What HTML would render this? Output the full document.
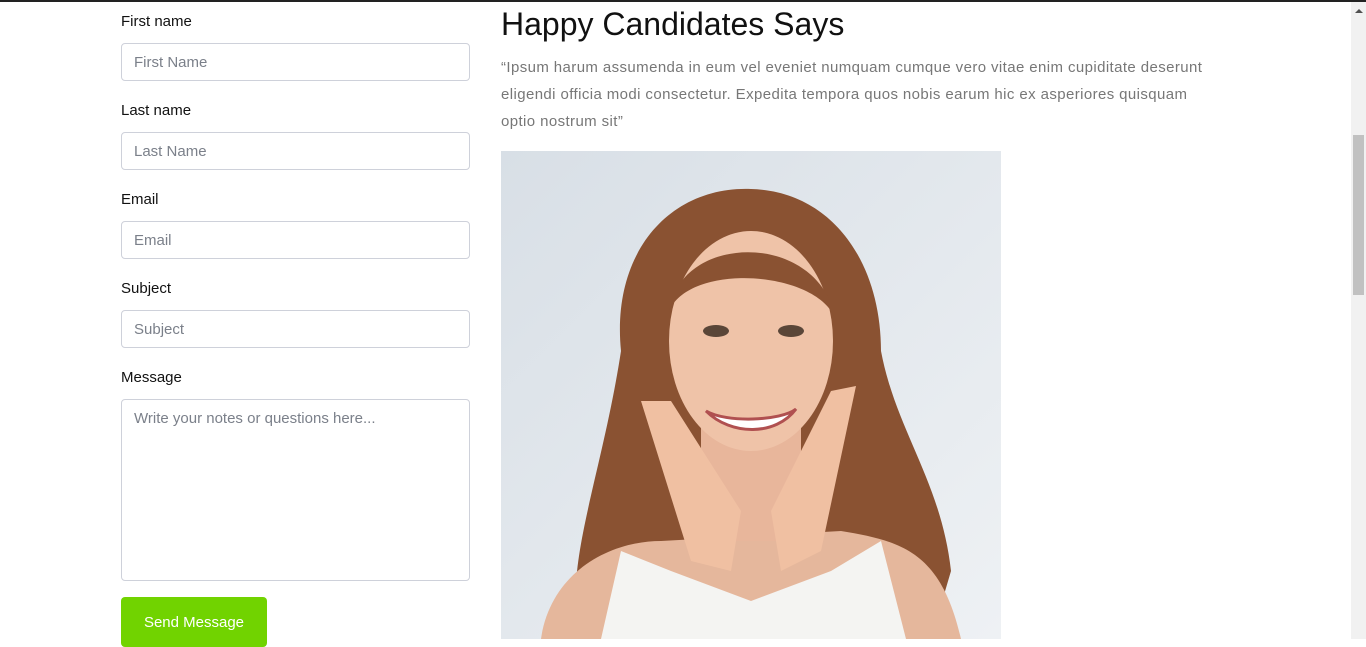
<!DOCTYPE html>
<html><head><meta charset="utf-8"><style>
*{box-sizing:border-box;margin:0;padding:0}
body{width:1366px;height:639px;overflow:hidden;background:#fff;font-family:"Liberation Sans",sans-serif;position:relative}
.top{position:absolute;left:0;top:0;width:1366px;height:2px;background:#222}
.sb{position:absolute;left:1351px;top:2px;width:15px;height:637px;background:#f1f1f1}
.sb .th{position:absolute;left:2px;top:133px;width:11px;height:160px;background:#c1c1c1}
.sb .ar{position:absolute;left:4px;top:7px;width:0;height:0;border-left:4px solid transparent;border-right:4px solid transparent;border-bottom:4px solid #505050}
label{position:absolute;left:121px;font-size:15px;color:#111;margin-top:1px}
.in{position:absolute;left:121px;width:349px;height:38px;border:1px solid #ced1da;border-radius:4px;font-size:15px;color:#7b808a;padding:10px 12px}
.btn{position:absolute;left:121px;top:597px;width:146px;height:50px;background:#71d300;border-radius:4px;color:#fff;font-size:15px;padding-top:17px;text-align:center}
h2{position:absolute;left:501px;top:6px;font-weight:normal;font-size:32px;color:#111}
p{position:absolute;left:501px;top:54px;white-space:nowrap;letter-spacing:0.4px;font-size:15px;line-height:27px;color:#777}
.img{position:absolute;left:501px;top:151px;width:500px;height:488px;overflow:hidden}
</style></head><body>
<div class="top"></div>
<label style="top:12px">First name</label>
<div class="in" style="top:43px">First Name</div>
<label style="top:101px">Last name</label>
<div class="in" style="top:132px">Last Name</div>
<label style="top:190px">Email</label>
<div class="in" style="top:221px">Email</div>
<label style="top:279px">Subject</label>
<div class="in" style="top:310px">Subject</div>
<label style="top:368px">Message</label>
<div class="in" style="top:399px;height:182px">Write your notes or questions here...</div>
<div class="btn">Send Message</div>
<h2>Happy Candidates Says</h2>
<p>“Ipsum harum assumenda in eum vel eveniet numquam cumque vero vitae enim cupiditate deserunt<br>eligendi officia modi consectetur. Expedita tempora quos nobis earum hic ex asperiores quisquam<br>optio nostrum sit”</p>
<div class="img"><svg width="500" height="488" viewBox="0 0 500 488">
<defs><linearGradient id="bg" x1="0" y1="0" x2="1" y2="1"><stop offset="0" stop-color="#d8dfe6"/><stop offset="1" stop-color="#eef1f4"/></linearGradient></defs>
<rect width="500" height="488" fill="url(#bg)"/>
<path d="M120 200 C110 100 170 35 250 38 C330 40 380 110 380 200 C395 280 440 330 450 420 L430 488 L80 488 C60 420 100 330 120 200Z" fill="#8a5232"/>
<path d="M40 488 C50 420 110 390 160 390 L340 380 C400 390 440 400 460 488Z" fill="#e5b79c"/>
<path d="M100 488 L120 400 L170 420 L250 450 L330 420 L380 390 L405 488Z" fill="#f4f4f2"/>
<rect x="200" y="260" width="100" height="130" fill="#e8b69b"/>
<ellipse cx="250" cy="190" rx="82" ry="110" fill="#efc3a8"/>
<path d="M168 160 C180 80 320 80 335 170 C320 120 190 110 168 160Z" fill="#8a5232"/>
<ellipse cx="215" cy="180" rx="13" ry="6" fill="#5a4638"/>
<ellipse cx="290" cy="180" rx="13" ry="6" fill="#5a4638"/>
<path d="M205 260 C230 285 275 285 295 258 C280 270 225 272 205 260Z" fill="#fff" stroke="#b05050" stroke-width="3"/>
<path d="M140 250 L170 250 L240 360 L230 420 L190 410Z" fill="#f0c0a2"/>
<path d="M355 235 L330 240 L270 360 L280 420 L320 400Z" fill="#f0c0a2"/>
</svg></div>
<div class="sb"><div class="ar"></div><div class="th"></div></div>
</body></html>
